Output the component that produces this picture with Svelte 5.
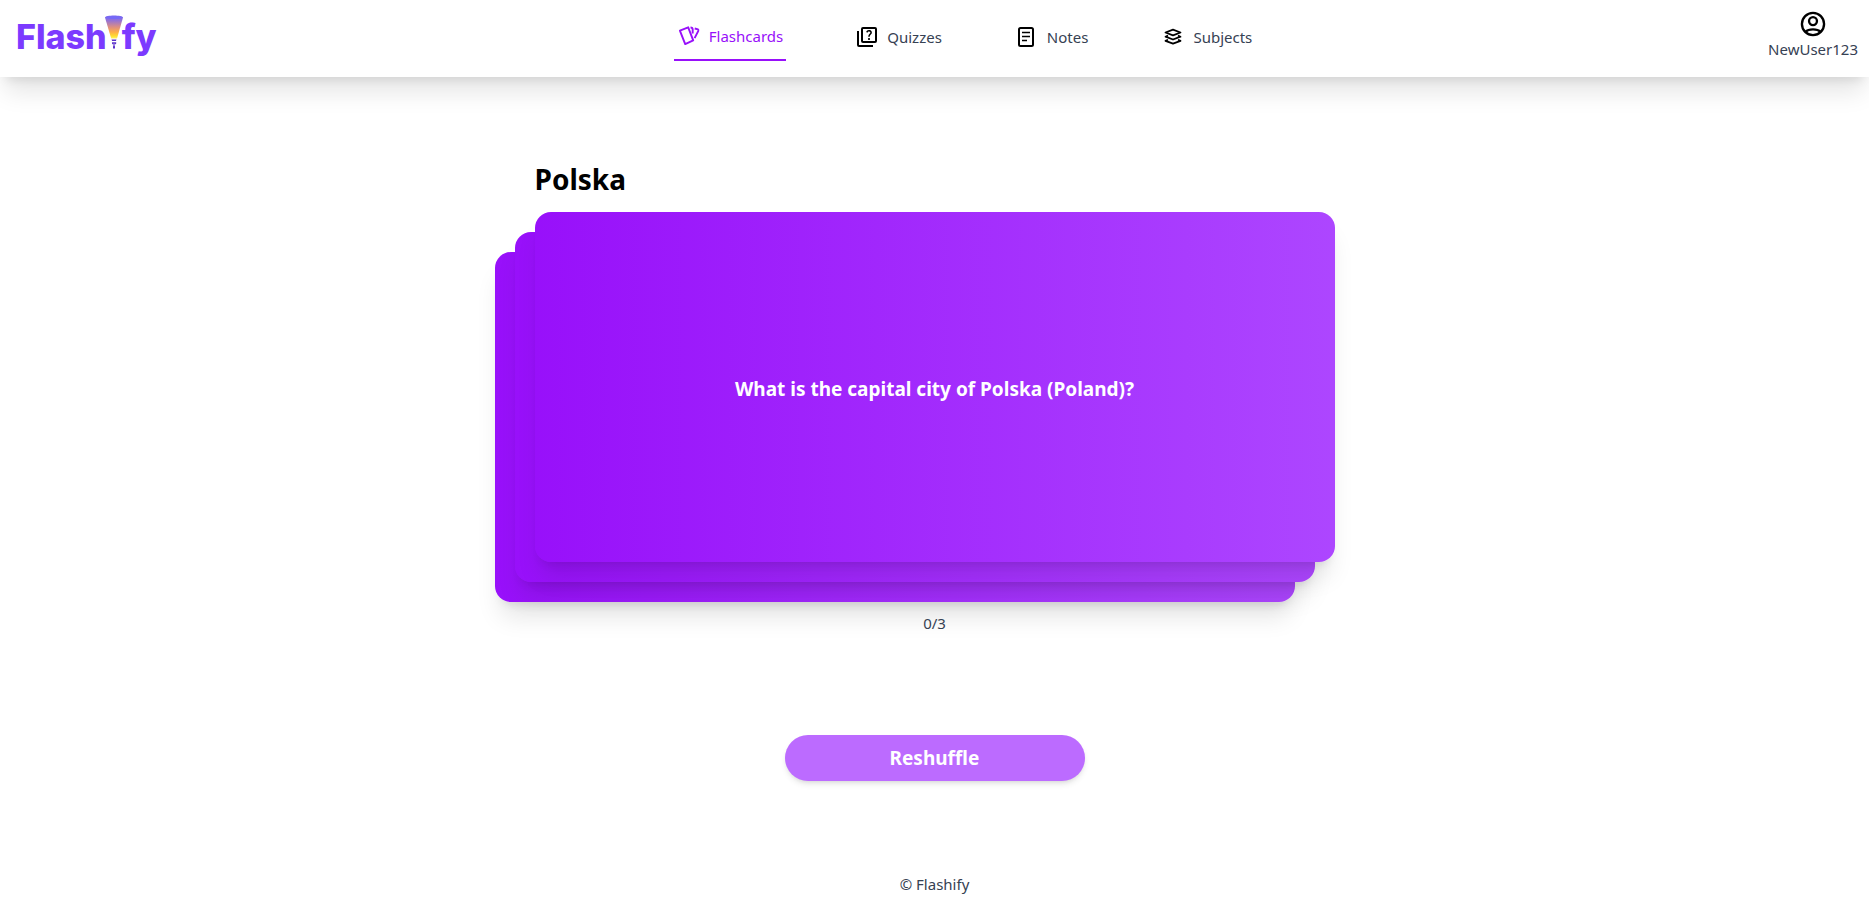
<script>
  const links = [
    { label: 'Flashcards', icon: 'cards', active: true },
    { label: 'Quizzes', icon: 'quiz' },
    { label: 'Notes', icon: 'notes' },
    { label: 'Subjects', icon: 'layers' }
  ];
  const question = 'What is the capital city of Polska (Poland)?';
  let order = $state([2, 1, 0]);
  let done = $state(0);

  function reshuffle() {
    done = 0;
    order = [2, 1, 0];
  }
</script>

<header>
  <a class="logo" href="#home" aria-label="Flashify">
    <span>Flash</span>
    <svg class="beam" viewBox="0 0 18 34" width="18" height="34" aria-hidden="true">
      <defs>
        <linearGradient id="beam" x1="0" y1="0" x2="0" y2="1">
          <stop offset="0" stop-color="#7c69ef" />
          <stop offset="0.22" stop-color="#9472d6" />
          <stop offset="0.5" stop-color="#dc8e83" />
          <stop offset="0.72" stop-color="#ffad48" />
          <stop offset="0.9" stop-color="#ffe02e" />
          <stop offset="1" stop-color="#fff36b" />
        </linearGradient>
      </defs>
      <path d="M0 2.5C0 -.3 18 -.3 18 2.5L12 23.5H6.200z" fill="url(#beam)" />
      <path d="M.3 2.500C1.500.5 16.500.5 17.700 2.500 16.500 4.500 1.500 4.500.3 2.500z" fill="#7669f6" />
      <path d="M6.500 24.500h5l-.6 1.500H7.100zM7 27.300h4.200v1.500L10 29.600v3.900H8v-3.900l-1-.8z" fill="#5b32c9" />
      <path d="M9 28.600v2.600" stroke="#fff" stroke-width=".8" />
    </svg>
    <span>fy</span>
  </a>

  <nav aria-label="Main">
    {#each links as link}
      <a class:active={link.active} href={'#' + link.label.toLowerCase()}>
        {#if link.icon === 'cards'}
          <svg class="icon" viewBox="0 0 24 24" fill="none" stroke="currentColor" stroke-width="1.9" stroke-linejoin="round" aria-hidden="true">
            <path d="M2.900 6.600 11.200 3.300 16.200 16.400 8.200 20.100z" />
            <path d="M13.500 3.500c1.600 0 2.200.6 2.200 2.100v4M17.700 4.500c2 .5 4.400.5 3.500 2.600l-3.600 7" />
          </svg>
        {:else if link.icon === 'quiz'}
          <svg class="icon" viewBox="0 0 24 24" fill="currentColor" aria-hidden="true">
            <path d="M4 6H2v14a2 2 0 0 0 2 2h14v-2H4V6zM20 2H8a2 2 0 0 0-2 2v12a2 2 0 0 0 2 2h12a2 2 0 0 0 2-2V4a2 2 0 0 0-2-2zm0 14H8V4h12v12z" />
            <path d="M13.510 10.160c.41-.73 1.180-1.160 1.630-1.800.48-.68.210-1.940-1.140-1.940-.88 0-1.320.67-1.500 1.230l-1.370-.57C11.510 5.960 12.520 5 13.990 5c1.230 0 2.080.56 2.510 1.260.37.6.58 1.730.010 2.570-.63.93-1.230 1.210-1.560 1.810-.13.24-.18.4-.18 1.180h-1.520c.010-.410-.060-1.080.260-1.660zM12.950 13.950c0-.590.470-1.040 1.050-1.040.590 0 1.040.450 1.040 1.040 0 .580-.440 1.050-1.040 1.050-.580 0-1.050-.470-1.050-1.050z" />
          </svg>
        {:else if link.icon === 'notes'}
          <svg class="icon" viewBox="0 0 24 24" fill="none" stroke="currentColor" stroke-width="2" aria-hidden="true">
            <rect x="4" y="3" width="14" height="18" rx="1.500" />
            <path d="M7 7.500h8M7 11.500h8M7 15.500h5" stroke-width="1.600" />
          </svg>
        {:else}
          <svg class="icon" viewBox="0 0 24 24" fill="none" stroke="currentColor" stroke-width="1.800" stroke-linejoin="round" aria-hidden="true">
            <path d="M4.500 7.500 12 4.700l7.500 2.800-7.500 2.800z" />
            <path d="M7 10.500 4.500 11.700 12 14.500l7.500-2.800-2.500-1.200M7 14.700 4.500 15.900 12 18.700l7.500-2.800-2.500-1.200" />
          </svg>
        {/if}
        <span>{link.label}</span>
      </a>
    {/each}
  </nav>

  <a class="user" href="#profile">
    <svg viewBox="0 0 24 24" width="28" height="28" fill="none" stroke="currentColor" stroke-width="2" aria-hidden="true">
      <circle cx="12" cy="12" r="9.500" />
      <circle cx="12" cy="9.500" r="3.400" />
      <path d="M5.400 18.700C8.500 15.900 15.500 15.900 18.600 18.700" />
    </svg>
    <span>NewUser123</span>
  </a>
</header>

<main>
  <section class="deck">
    <h1>Polska</h1>
    <div class="stack">
      {#each order as depth}
        {#if depth > 0}
          <div class="card under" class:last={depth === 2}></div>
        {:else}
          <button class="card" type="button">{question}</button>
        {/if}
      {/each}
    </div>
    <p>{done}/3</p>
  </section>
  <button class="reshuffle" type="button" onclick={reshuffle}>Reshuffle</button>
</main>

<footer>© Flashify</footer>

<style>
  :global(body) {
    background: #fff;
    color: #364153;
    font: 15px/24px "Noto Sans", "Open Sans", sans-serif;
  }
  * {
    box-sizing: border-box;
  }
  a {
    color: inherit;
    text-decoration: none;
  }
  button {
    border: 0;
    font-family: inherit;
    color: #fff;
    cursor: pointer;
  }
  header {
    display: flex;
    justify-content: space-between;
    align-items: flex-start;
    padding: 12px 11px 15px 16px;
    box-shadow: 0 20px 25px -5px rgb(0 0 0 / 0.1), 0 8px 10px -6px rgb(0 0 0 / 0.1);
  }
  .logo {
    display: flex;
    min-width: 146px;
    color: #7c3aff;
    font: 800 34px/50px Inter, sans-serif;
  }
  .beam {
    margin: 3px -1px 0 -2px;
  }
  nav {
    display: flex;
    gap: 65px;
  }
  nav a {
    display: flex;
    align-items: center;
    gap: 8px;
    height: 49px;
    padding: 0 4px;
  }
  .icon {
    width: 24px;
    height: 24px;
    color: #000;
  }
  nav .active {
    padding: 0 3px;
    border-bottom: 2px solid #9810fa;
    color: #9810fa;
  }
  .active .icon {
    color: #9810fa;
  }
  .user {
    display: flex;
    flex-direction: column;
    align-items: center;
    line-height: 23px;
  }
  .user svg {
    display: block;
    margin-top: -2px;
    color: #000;
  }
  main {
    display: flex;
    flex-direction: column;
    align-items: center;
    gap: 100px;
    padding: 84px 40px;
  }
  .deck {
    width: 100%;
    max-width: 800px;
  }
  h1 {
    margin: 0 0 15px;
    color: #000;
    font-size: 28px;
    line-height: 36px;
    font-weight: 700;
  }
  .stack {
    display: grid;
    padding-bottom: 49px;
  }
  .card {
    grid-area: 1 / 1;
    position: relative;
    height: 350px;
    padding: 4px 16px 0;
    border-radius: 16px;
    background: linear-gradient(to right, #9810fa, #ad46ff);
    box-shadow: 0 20px 25px -5px rgb(0 0 0 / 0.1), 0 8px 10px -6px rgb(0 0 0 / 0.1);
    font-size: 19px;
    font-weight: 700;
  }
  .under {
    left: -20px;
    top: 20px;
  }
  .last {
    left: -40px;
    top: 40px;
  }
  p {
    position: relative;
    margin: 0;
    text-align: center;
  }
  .reshuffle {
    width: 300px;
    padding: 11px 16px;
    border-radius: 23px;
    background: #bc6bff;
    box-shadow: 0 4px 6px -1px rgb(0 0 0 / 0.1), 0 2px 4px -2px rgb(0 0 0 / 0.1);
    font-size: 19px;
    line-height: 24px;
    font-weight: 700;
  }
  footer {
    padding: 7px 0 16px;
    text-align: center;
  }
</style>
